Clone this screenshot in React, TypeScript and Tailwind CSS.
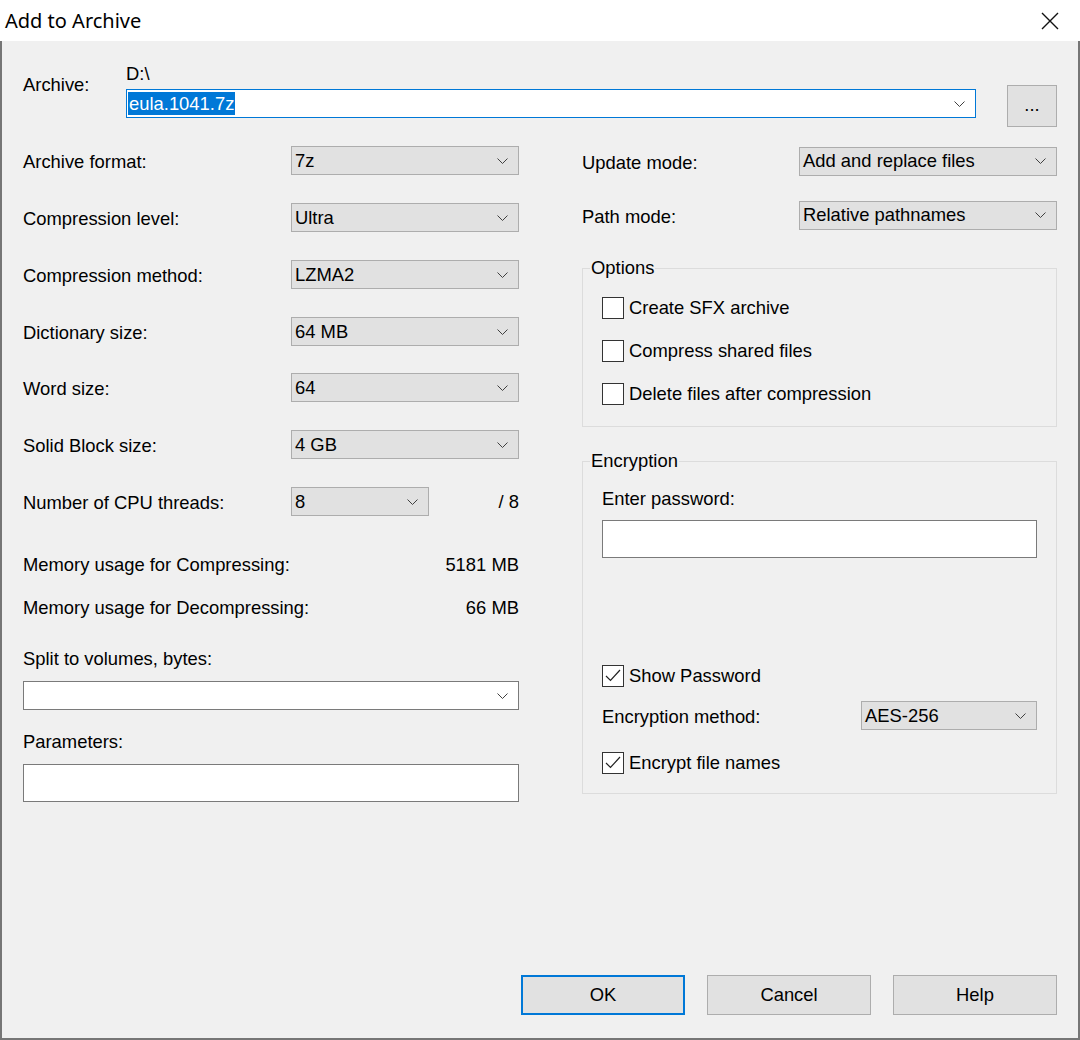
import React from "react";

type FieldRow = {
  label: string;
  value: string;
  tall: boolean;
};

const leftRows: FieldRow[] = [
  { label: "Archive format:", value: "7z", tall: true },
  { label: "Compression level:", value: "Ultra", tall: true },
  { label: "Compression method:", value: "LZMA2", tall: true },
  { label: "Dictionary size:", value: "64 MB", tall: false },
  { label: "Word size:", value: "64", tall: true },
  { label: "Solid Block size:", value: "4 GB", tall: true },
];

const sans = "font-['Liberation_Sans',Arial,sans-serif]";

function Chevron() {
  return (
    <svg width="11" height="6" viewBox="0 0 11 6" className="shrink-0">
      <polyline
        points="0.5,0.5 5.5,5.5 10.5,0.5"
        fill="none"
        stroke="#404040"
        strokeWidth="1"
      />
    </svg>
  );
}

function Combo({ value, className = "" }: { value: string; className?: string }) {
  return (
    <div
      className={`flex h-[29px] items-center justify-between border border-[#adadad] bg-[#e1e1e1] pl-[3px] pr-[10px] ${className}`}
    >
      <span>{value}</span>
      <Chevron />
    </div>
  );
}

function CheckBox({ label, checked = false }: { label: string; checked?: boolean }) {
  return (
    <div className="flex h-[22px] items-center">
      <div className="flex h-[22px] w-[22px] items-center justify-center border border-[#333333] bg-white">
        {checked && (
          <svg width="18" height="18" viewBox="0 0 18 18">
            <polyline
              points="2,9 6.5,13.5 16,3"
              fill="none"
              stroke="#222222"
              strokeWidth="1.2"
            />
          </svg>
        )}
      </div>
      <span className="ml-[5px]">{label}</span>
    </div>
  );
}

function GroupBox({
  title,
  className = "",
  children,
}: {
  title: string;
  className?: string;
  children: React.ReactNode;
}) {
  return (
    <fieldset className={`border border-[#dcdcdc] pl-[7px] ${className}`}>
      <legend className="h-[22px] px-[1px] leading-[22px]">{title}</legend>
      <div className="pl-[12px] pr-[19px]">{children}</div>
    </fieldset>
  );
}

export default function App() {
  return (
    <div className={`flex h-[1040px] w-[1080px] flex-col text-[18.4px] text-black ${sans}`}>
      {/* title bar */}
      <div className="flex h-[41px] shrink-0 items-center justify-between bg-white pl-[5px] pr-[21px]">
        <span className="font-['Noto_Sans',sans-serif] text-[20px] leading-none">
          Add to Archive
        </span>
        <svg width="18" height="18" viewBox="0 0 18 18">
          <path d="M1 1 L17 17 M17 1 L1 17" stroke="#111111" strokeWidth="1.4" />
        </svg>
      </div>

      <div className="flex flex-1 flex-col border-x-2 border-b-2 border-[#767676] bg-[#f0f0f0] px-[21px]">
        {/* archive path */}
        <div className="mt-[22px] flex items-start">
          <div className="w-[103px] pt-[11px] leading-[22px]">Archive:</div>
          <div className="flex w-[850px] flex-col">
            <div className="h-[26px] leading-[22px]">D:\</div>
            <div className="flex h-[29px] items-center justify-between border border-[#0078d7] bg-white pl-[1px] pr-[10px]">
              <span className="flex h-[23px] items-center bg-[#0078d7] px-[1px] text-white">
                eula.1041.7z
              </span>
              <Chevron />
            </div>
          </div>
          <div className="ml-[31px] mt-[22px] flex h-[42px] w-[50px] items-start justify-center border border-[#adadad] bg-[#e1e1e1] pt-[8px] leading-[22px]">
            ...
          </div>
        </div>

        <div className="mt-[19px] flex gap-[63px]">
          {/* compression settings */}
          <div className="flex w-[496px] flex-col">
            {leftRows.map((row) => (
              <div key={row.label} className={row.tall ? "h-[57px]" : "h-[56px]"}>
                <div className="flex h-[29px] items-center justify-between">
                  <span className="pt-[3px]">{row.label}</span>
                  <Combo value={row.value} className="w-[228px]" />
                </div>
              </div>
            ))}
            <div className="flex h-[29px] items-center">
              <span className="w-[268px] pt-[3px]">Number of CPU threads:</span>
              <Combo value="8" className="w-[138px]" />
              <span className="ml-auto pt-[1px]">/ 8</span>
            </div>
            <div className="mt-[38px] flex h-[22px] items-center justify-between">
              <span>Memory usage for Compressing:</span>
              <span>5181 MB</span>
            </div>
            <div className="mt-[21px] flex h-[22px] items-center justify-between">
              <span>Memory usage for Decompressing:</span>
              <span>66 MB</span>
            </div>
            <div className="mt-[29px] h-[22px] leading-[22px]">Split to volumes, bytes:</div>
            <div className="mt-[11px] flex h-[29px] items-center justify-end border border-[#7a7a7a] bg-white pr-[10px]">
              <Chevron />
            </div>
            <div className="mt-[21px] h-[22px] leading-[22px]">Parameters:</div>
            <div className="mt-[11px] h-[38px] border border-[#7a7a7a] bg-white" />
          </div>

          {/* update / options / encryption */}
          <div className="flex w-[475px] flex-col">
            <div className="mt-[1px] flex h-[28px] items-center justify-between">
              <span className="pt-[3px]">Update mode:</span>
              <Combo value="Add and replace files" className="h-[28px] w-[258px]" />
            </div>
            <div className="mt-[26px] flex h-[28px] items-center justify-between">
              <span className="pt-[4px]">Path mode:</span>
              <Combo value="Relative pathnames" className="h-[28px] w-[258px]" />
            </div>

            <GroupBox title="Options" className="mt-[28px]">
              <div className="flex flex-col gap-[21px] pb-[21px] pt-[18px]">
                <CheckBox label="Create SFX archive" />
                <CheckBox label="Compress shared files" />
                <CheckBox label="Delete files after compression" />
              </div>
            </GroupBox>

            <GroupBox title="Encryption" className="mt-[23px]">
              <div className="flex flex-col pb-[19px] pt-[16px]">
                <div className="h-[22px] leading-[22px]">Enter password:</div>
                <div className="mt-[10px] h-[38px] border border-[#7a7a7a] bg-white" />
                <div className="mt-[107px]">
                  <CheckBox label="Show Password" checked />
                </div>
                <div className="mt-[14px] flex h-[29px] items-center justify-between">
                  <span className="pt-[3px]">Encryption method:</span>
                  <Combo value="AES-256" className="w-[176px]" />
                </div>
                <div className="mt-[22px]">
                  <CheckBox label="Encrypt file names" checked />
                </div>
              </div>
            </GroupBox>
          </div>
        </div>

        {/* dialog buttons */}
        <div className="mb-[23px] mt-auto flex justify-end gap-[22px]">
          {["OK", "Cancel", "Help"].map((name) => (
            <button
              key={name}
              className={`h-[40px] w-[164px] bg-[#e1e1e1] ${
                name === "OK" ? "border-2 border-[#0078d7]" : "border border-[#adadad]"
              }`}
            >
              {name}
            </button>
          ))}
        </div>
      </div>
    </div>
  );
}
